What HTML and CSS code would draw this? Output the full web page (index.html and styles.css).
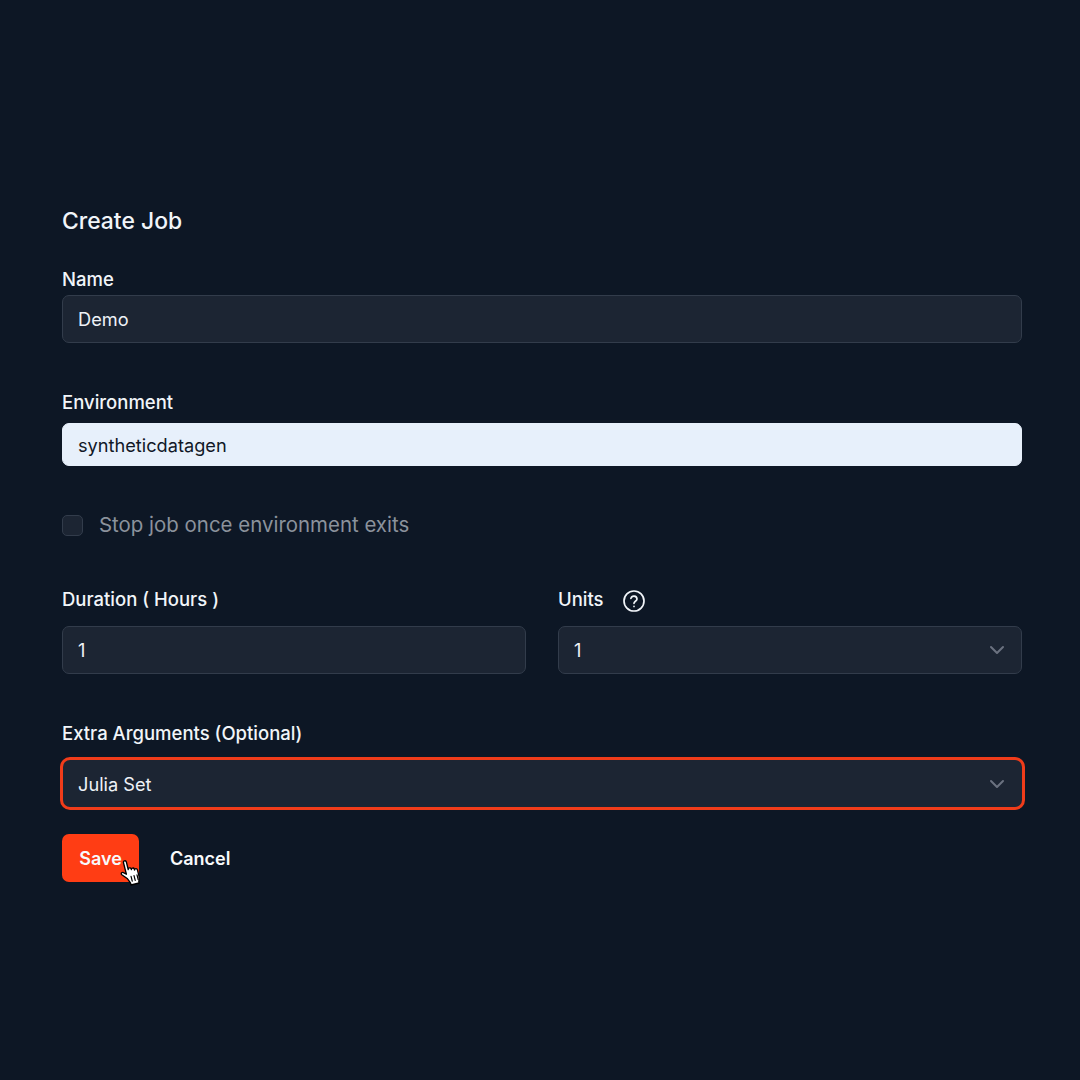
FILE: index.html
```html
<!DOCTYPE html>
<html lang="en">

<head>
    <meta charset="UTF-8">
    <meta name="viewport" content="width=device-width, initial-scale=1.0">
    <title>Create Job</title>
    <link rel="stylesheet" href="styles.css">
</head>

<body>

    <form class="job-form">
        <h1 class="form-title">Create Job</h1>

        <div class="field field-name">
            <label class="field-label">Name</label>
            <div class="input">Demo</div>
        </div>

        <div class="field field-env">
            <label class="field-label">Environment</label>
            <div class="input input-filled">syntheticdatagen</div>
        </div>

        <div class="check-row">
            <span class="checkbox"></span>
            <span class="check-text">Stop job once environment exits</span>
        </div>

        <div class="field-row">
            <div class="field">
                <label class="field-label">Duration ( Hours )</label>
                <div class="input">1</div>
            </div>
            <div class="field">
                <label class="field-label">Units
                    <svg class="help-icon" viewBox="0 0 24 24" width="24" height="24" fill="none" stroke="#f1f5f9" stroke-width="1.7" stroke-linecap="round" stroke-linejoin="round">
                        <circle cx="12" cy="12" r="10"></circle>
                        <path d="M8.9 9.4a3.1 3.1 0 0 1 6.1.6c0 2-3 2.5-3 4.3"></path>
                        <path d="M12 17.4v.1"></path>
                    </svg>
                </label>
                <div class="input input-select">1
                    <svg class="chevron" viewBox="0 0 16 10" width="16" height="10" fill="none" stroke="#6b7280" stroke-width="2" stroke-linecap="round" stroke-linejoin="round">
                        <path d="M2 2l6 6 6-6"></path>
                    </svg>
                </div>
            </div>
        </div>

        <div class="field field-args">
            <label class="field-label">Extra Arguments (Optional)</label>
            <div class="input input-select input-focus">Julia Set
                <svg class="chevron" viewBox="0 0 16 10" width="16" height="10" fill="none" stroke="#6b7280" stroke-width="2" stroke-linecap="round" stroke-linejoin="round">
                    <path d="M2 2l6 6 6-6"></path>
                </svg>
            </div>
        </div>

        <div class="actions">
            <button class="btn btn-save" type="button">Save
                <svg class="cursor" viewBox="0 0 22 26" width="27" height="32" stroke="#000" stroke-width="1.1" stroke-linejoin="round" stroke-linecap="round">
                    <g transform="rotate(-14 11 13)">
                        <path fill="#fff" d="M6.500 16.500 3 12.500c-.9-1.100.6-2.400 1.700-1.400l2 1.900V3.200c0-1.600 2.400-1.600 2.400 0v6.400c.1-1.400 2.400-1.400 2.500 0v.7c.1-1.300 2.300-1.300 2.400.1v.8c.2-1.200 2.200-1.100 2.300.3v5.500c0 1.800-.6 3-1.200 4.200v1.200H8.300v-1.400c-.5-1.300-1-3-1.800-4.600z"></path>
                        <path fill="none" stroke-width="1" d="M10 15.500v4M12.500 15.500v4M15 15.500v4"></path>
                    </g>
                </svg>
            </button>
            <button class="btn btn-cancel" type="button">Cancel</button>
        </div>
    </form>

</body>

</html>
```

FILE: styles.css
```css
body {
    margin: 0;
    min-height: 1080px;
    background-color: #0d1725;
    color: #f1f5f9;
    font-family: Inter, "Noto Sans", sans-serif;
    font-size: 18px;
}

.job-form {
    box-sizing: border-box;
    width: 1080px;
    padding: 206px 58px 0 62px;
}

.form-title {
    margin: 0 0 31px;
    font-size: 22.9px;
    line-height: 30px;
    font-weight: 500;
}

.field-label {
    display: flex;
    align-items: center;
    height: 24px;
    margin-bottom: 4px;
    font-size: 18.5px;
    font-weight: 500;
}

.field-name {
    margin-bottom: 47px;
}

.field-env {
    margin-bottom: 47px;
}

.field-env .field-label {
    margin-bottom: 9px;
}

.input {
    box-sizing: border-box;
    display: flex;
    align-items: center;
    justify-content: space-between;
    height: 48px;
    padding: 0 16px 0 15px;
    background-color: #1c2533;
    border: 1px solid #323c4b;
    border-radius: 7px;
    color: #eef2f7;
    font-size: 18.2px;
}

.input-filled {
    height: 43px;
    background-color: #e7f0fb;
    border-color: #e7f0fb;
    color: #111827;
}

.check-row {
    display: flex;
    align-items: center;
    gap: 16px;
    margin-bottom: 50px;
}

.checkbox {
    box-sizing: border-box;
    width: 21px;
    height: 21px;
    background-color: #1c2533;
    border: 1px solid #323c4b;
    border-radius: 5px;
}

.check-text {
    color: #8b929c;
    font-size: 20.45px;
    line-height: 24px;
}

.field-row {
    display: grid;
    grid-template-columns: 464px 464px;
    column-gap: 32px;
    margin-bottom: 47px;
}

.field-row .field-label {
    margin-bottom: 15px;
}

.help-icon {
    margin: 4px 0 0 18px;
}

.field-args {
    margin-bottom: 24px;
}

.field-args .field-label {
    margin-bottom: 12px;
}

.input-focus {
    height: 53px;
    margin: 0 -3px 0 -2px;
    padding: 0 17px 0 15px;
    border: 3px solid #f03c1a;
    border-radius: 10px;
}

.actions {
    display: flex;
    align-items: center;
    gap: 31px;
}

.btn {
    height: 48px;
    padding: 0;
    border: 0;
    color: #f8fafc;
    font-family: inherit;
    font-size: 18px;
    font-weight: 600;
}

.btn-save {
    position: relative;
    width: 77px;
    background-color: #ff3d14;
    border-radius: 7px;
}

.btn-cancel {
    background: none;
}

.cursor {
    position: absolute;
    left: 56px;
    top: 23px;
}
```
